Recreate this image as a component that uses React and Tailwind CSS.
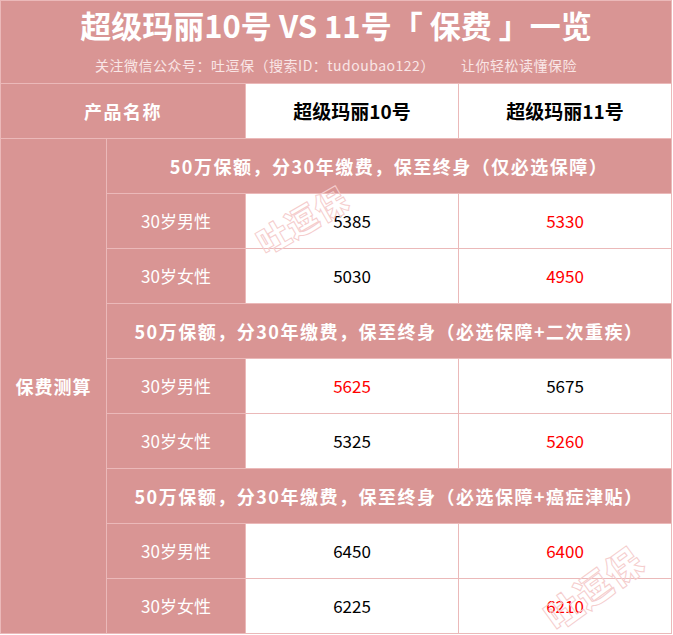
const sections = [
  {
    title: "50万保额，分30年缴费，保至终身（仅必选保障）",
    rows: [
      { label: "30岁男性", a: "5385", b: "5330", red: "b" },
      { label: "30岁女性", a: "5030", b: "4950", red: "b" },
    ],
  },
  {
    title: "50万保额，分30年缴费，保至终身（必选保障+二次重疾）",
    rows: [
      { label: "30岁男性", a: "5625", b: "5675", red: "a" },
      { label: "30岁女性", a: "5325", b: "5260", red: "b" },
    ],
  },
  {
    title: "50万保额，分30年缴费，保至终身（必选保障+癌症津贴）",
    rows: [
      { label: "30岁男性", a: "6450", b: "6400", red: "b" },
      { label: "30岁女性", a: "6225", b: "6210", red: "b" },
    ],
  },
];

function Watermark({ className }) {
  return (
    <div
      className={`absolute pointer-events-none font-black leading-none text-transparent [-webkit-text-stroke:1px_#f5cdcd] tracking-[1px] ${className}`}
    >
      吐逗保
    </div>
  );
}

export default function App() {
  return (
    <div className="w-[673px] h-[635px] bg-white font-['Noto_Sans_CJK_SC',sans-serif] relative overflow-hidden">
      <div className="grid grid-cols-[105px_138px_212px_212px] grid-rows-[82px_repeat(10,54px)] gap-px bg-[#ebb9b9] p-px w-[672px]">
        {/* title */}
        <div className="col-span-4 bg-[#d99594] flex flex-col items-center">
          <h1 className="text-white font-bold text-[31px] leading-none mt-[8px]">
            超级玛丽10号 VS 11号「 保费 」一览
          </h1>
          <p className="text-[#f9e6e6] text-[14px] leading-none mt-[18px] tracking-[0.5px]">
            关注微信公众号：吐逗保（搜索ID：tudoubao122）
            <span className="ml-[26px]">让你轻松读懂保险</span>
          </p>
        </div>

        {/* header */}
        <div className="col-span-2 bg-[#d99594] flex items-center justify-center text-white font-bold text-[18px] tracking-[1.5px]">
          产品名称
        </div>
        <div className="bg-white flex items-center justify-center font-bold text-[19px] text-black">
          超级玛丽10号
        </div>
        <div className="bg-white flex items-center justify-center font-bold text-[19px] text-black">
          超级玛丽11号
        </div>

        {/* left merged column */}
        <div className="row-span-9 bg-[#d99594] flex items-center justify-center text-white font-bold text-[18px] tracking-[1px]">
          保费测算
        </div>

        {sections.map((s, i) => (
          <div key={i} className="contents">
            <div className="col-span-3 bg-[#d99594] flex items-center justify-center text-white font-bold text-[18px] tracking-[1.5px]">
              {s.title}
            </div>
            {s.rows.map((r, j) => (
              <div key={j} className="contents">
                <div className="bg-[#d99594] flex items-center justify-center text-white text-[17px]">
                  {r.label}
                </div>
                <div
                  className={`bg-white flex items-center justify-center text-[17px] ${
                    r.red === "a" ? "text-[#ff0000]" : "text-black"
                  }`}
                >
                  {r.a}
                </div>
                <div
                  className={`bg-white flex items-center justify-center text-[17px] ${
                    r.red === "b" ? "text-[#ff0000]" : "text-black"
                  }`}
                >
                  {r.b}
                </div>
              </div>
            ))}
          </div>
        ))}
      </div>

      <Watermark className="left-[252px] top-[203px] text-[32px] -rotate-[30deg]" />
      <Watermark className="left-[537px] top-[569px] text-[36px] -rotate-[36deg]" />
    </div>
  );
}
